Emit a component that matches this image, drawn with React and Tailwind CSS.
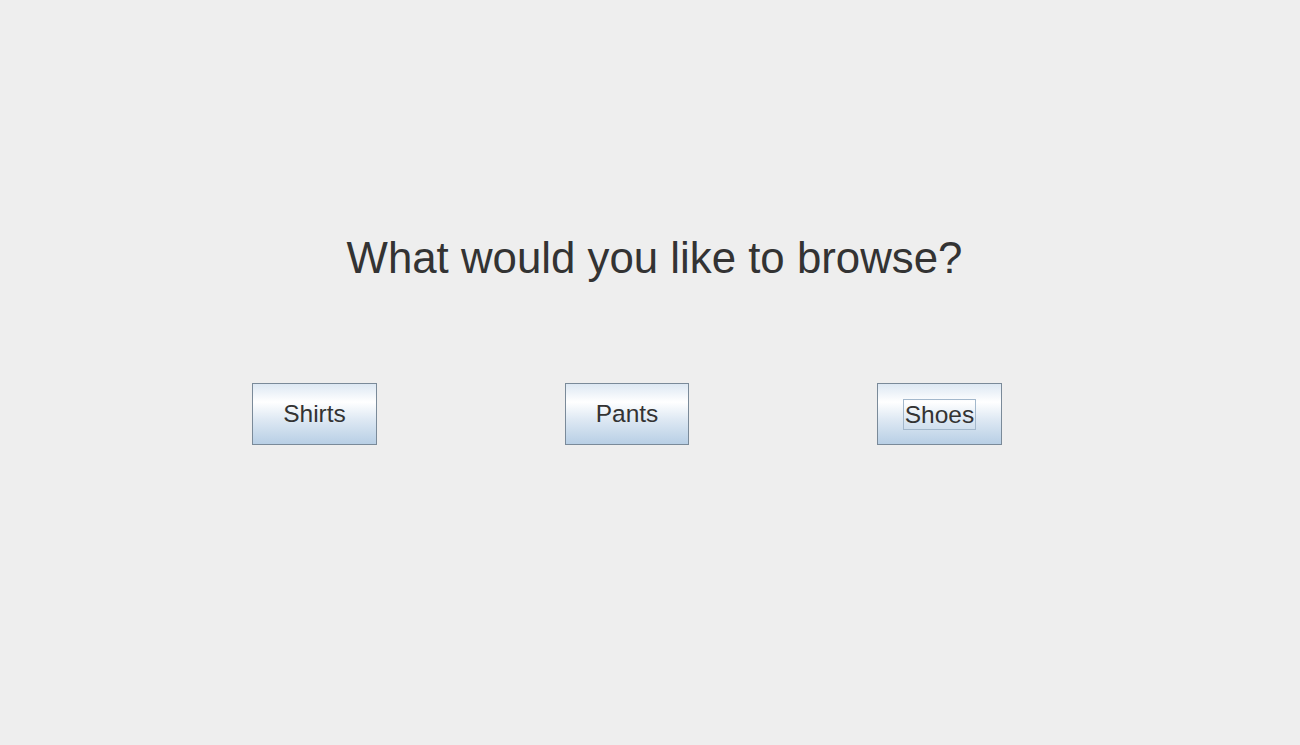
export default function App() {
  const btn =
    "h-[62px] border border-[#7a8a99] bg-[linear-gradient(to_bottom,#dde8f3_0%,#ffffff_30%,#dde8f3_60%,#b8cfe5_100%)] flex items-center justify-center pt-[1px] text-[24.5px] text-[#333333]";
  return (
    <div className="w-[1300px] h-[745px] bg-[#eeeeee] flex flex-col" style={{ fontFamily: '"Liberation Sans", Arial, sans-serif' }}>
      <div className="h-[228px]" />
      <div className="h-[60px] flex items-center justify-center pl-[9px]">
        <span className="text-[43.8px] leading-none text-[#333333]">What would you like to browse?</span>
      </div>
      <div className="h-[95px]" />
      <div className="flex pl-[252px] gap-[188px]">
        <div className={btn + " w-[125px]"}>Shirts</div>
        <div className={btn + " w-[124px]"}>Pants</div>
        <div className={btn + " w-[125px]"}>
          <span className="border border-[#a3b8cc] px-[1px] leading-[29px]">Shoes</span>
        </div>
      </div>
    </div>
  );
}
